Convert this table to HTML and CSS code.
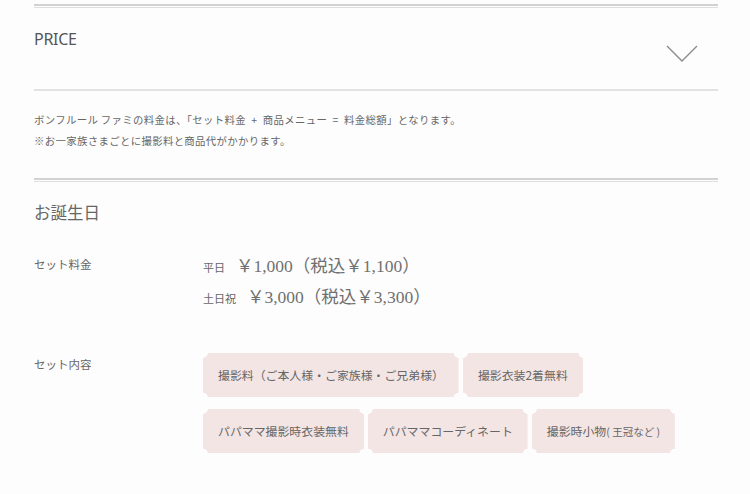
FILE: index.html
```html
<!DOCTYPE html>
<html lang="ja">
<head>
<meta charset="utf-8">
<link rel="stylesheet" href="styles.css">
</head>
<body>
<div class="page">
  <div class="rule-double"></div>
  <div class="header">
    <h2 class="title">PRICE</h2>
    <svg class="chevron" width="32" height="18" viewBox="0 0 32 18"><polyline points="1,1 16,16 31,1" fill="none" stroke="#8a8a8a" stroke-width="1.4"/></svg>
  </div>
  <div class="rule-single"></div>
  <div class="intro">
    <p>ボンフルール ファミの料金は、「セット料金&nbsp;&nbsp;+&nbsp;&nbsp;商品メニュー&nbsp;&nbsp;=&nbsp;&nbsp;料金総額」となります。</p>
    <p>※お一家族さまごとに撮影料と商品代がかかります。</p>
  </div>
  <div class="rule-double"></div>
  <h3 class="plan">お誕生日</h3>
  <div class="row row-price">
    <div class="label">セット料金</div>
    <div class="value">
      <div class="price"><span class="day">平日</span><span class="amount">￥1,000（税込￥1,100）</span></div>
      <div class="price"><span class="day">土日祝</span><span class="amount">￥3,000（税込￥3,300）</span></div>
    </div>
  </div>
  <div class="row row-tags">
    <div class="label">セット内容</div>
    <div class="tags">
      <span class="tag">撮影料（ご本人様・ご家族様・ご兄弟様）</span>
      <span class="tag">撮影衣装2着無料</span>
      <span class="tag">パパママ撮影時衣装無料</span>
      <span class="tag">パパママコーディネート</span>
      <span class="tag">撮影時小物<small>(&nbsp;王冠など&nbsp;)</small></span>
    </div>
  </div>
</div>
</body>
</html>
```
FILE: styles.css
```css
html, body {
  margin: 0;
  padding: 0;
  background: #fdfdfd;
}
body {
  font-family: "Noto Sans CJK JP", "Noto Sans", sans-serif;
  color: #666;
}
.page {
  width: 684px;
  margin-left: 34px;
  padding-top: 4px;
}
.rule-double {
  height: 1px;
  border-top: 2px solid #d2d2d2;
  border-bottom: 1px solid #dedede;
}
.rule-single {
  height: 0;
  border-top: 2px solid #e2e2e2;
}
.header {
  height: 81px;
  display: flex;
  justify-content: space-between;
  align-items: flex-start;
}
.title {
  margin: 19px 0 0;
  font-family: "Noto Sans", sans-serif;
  font-weight: 400;
  font-size: 16px;
  line-height: 24px;
  color: #555;
  letter-spacing: -0.3px;
}
.chevron {
  margin-top: 37px;
  margin-right: 20px;
}
.intro {
  padding: 18px 0 27px;
  font-size: 10.4px;
  line-height: 21px;
  letter-spacing: 0.35px;
}
.intro p {
  margin: 0;
}
.plan {
  margin: 17px 0 0;
  font-weight: 400;
  font-size: 16.5px;
  line-height: 26px;
  color: #666;
}
.row {
  display: flex;
}
.label {
  width: 169px;
  flex: none;
  font-size: 11.5px;
  color: #666;
}
.row-price {
  margin-top: 27px;
}
.row-price .label {
  line-height: 24px;
}
.price {
  display: flex;
  align-items: baseline;
  height: 31px;
  line-height: 28px;
}
.day {
  font-size: 11px;
  margin-right: 11px;
}
.amount {
  font-family: "Liberation Serif", "Noto Sans CJK JP", serif;
  font-size: 17.5px;
  color: #707070;
}
.row-tags {
  margin-top: 39px;
}
.row-tags .label {
  padding-top: 3px;
}
.tags {
  display: flex;
  flex-wrap: wrap;
  gap: 12px 4px;
  width: 500px;
}
.tag {
  display: inline-block;
  height: 44px;
  line-height: 44px;
  padding: 0 15px;
  font-size: 11.9px;
  color: #666;
  --c: #f3e5e4;
  background:
    radial-gradient(circle at 0 0, transparent 4.5px, var(--c) 5px) top left / 51% 51% no-repeat,
    radial-gradient(circle at 100% 0, transparent 4.5px, var(--c) 5px) top right / 51% 51% no-repeat,
    radial-gradient(circle at 0 100%, transparent 4.5px, var(--c) 5px) bottom left / 51% 51% no-repeat,
    radial-gradient(circle at 100% 100%, transparent 4.5px, var(--c) 5px) bottom right / 51% 51% no-repeat;
}
.tag small {
  font-size: 10.5px;
}
```
